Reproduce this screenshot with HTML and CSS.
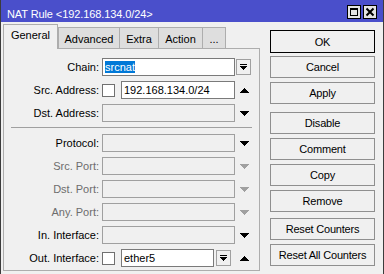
FILE: index.html
```
<!DOCTYPE html>
<html lang="en">
<head>
    <meta charset="UTF-8">
    <title>NAT Rule</title>
    <link rel="stylesheet" href="styles.css">
</head>
<body>
    <div class="window">
        <div class="titlebar">
            <span class="title">NAT Rule &lt;192.168.134.0/24&gt;</span>
            <div class="wbtns">
                <span class="wbtn">
                    <svg width="12" height="12" viewBox="0 0 12 12"><path d="M2 2h8v8H2z M3 4v5h6V4z" fill="#000" fill-rule="evenodd"/></svg>
                </span>
                <span class="wbtn">
                    <svg width="12" height="12" viewBox="0 0 12 12"><path d="M2.5 2.5l7 7M9.5 2.5l-7 7" stroke="#000" stroke-width="2"/></svg>
                </span>
            </div>
        </div>
        <div class="main">
            <div class="left">
                <div class="tabs">
                    <div class="tab active t-general">General</div>
                    <div class="tab t-adv">Advanced</div>
                    <div class="tab t-extra">Extra</div>
                    <div class="tab t-action">Action</div>
                    <div class="tab t-more">...</div>
                </div>
                <div class="panel">
                    <div class="row">
                        <span class="lbl">Chain:</span>
                        <span class="inp w-full"><span class="sel">srcnat</span></span>
                        <span class="dd dd-chain"><svg width="7" height="6" viewBox="0 0 7 6"><path d="M0 0h7v1H0z M0 2h7v1h-1v1h-1v1h-1v1h-1v-1h-1v-1h-1v-1H0z"/></svg></span>
                    </div>
                    <div class="row">
                        <span class="lbl">Src. Address:</span>
                        <span class="cb"></span>
                        <span class="inp w-cb">192.168.134.0/24</span>
                        <span class="arr"><svg width="9" height="5" viewBox="0 0 9 5"><path d="M4 0h1v1h1v1h1v1h1v1h1v1H0v-1h1v-1h1v-1h1v-1h1z"/></svg></span>
                    </div>
                    <div class="row">
                        <span class="lbl">Dst. Address:</span>
                        <span class="inp off w-full"></span>
                        <span class="arr"><svg width="9" height="5" viewBox="0 0 9 5"><path d="M0 0h9v1h-1v1h-1v1h-1v1h-1v1h-1v-1h-1v-1h-1v-1h-1v-1H0z"/></svg></span>
                    </div>
                    <div class="sep"></div>
                    <div class="row">
                        <span class="lbl">Protocol:</span>
                        <span class="inp off w-full"></span>
                        <span class="arr"><svg width="9" height="5" viewBox="0 0 9 5"><path d="M0 0h9v1h-1v1h-1v1h-1v1h-1v1h-1v-1h-1v-1h-1v-1h-1v-1H0z"/></svg></span>
                    </div>
                    <div class="row">
                        <span class="lbl dim">Src. Port:</span>
                        <span class="inp off w-full"></span>
                        <span class="arr dim"><svg width="9" height="5" viewBox="0 0 9 5"><path d="M0 0h9v1h-1v1h-1v1h-1v1h-1v1h-1v-1h-1v-1h-1v-1h-1v-1H0z"/></svg></span>
                    </div>
                    <div class="row">
                        <span class="lbl dim">Dst. Port:</span>
                        <span class="inp off w-full"></span>
                        <span class="arr dim"><svg width="9" height="5" viewBox="0 0 9 5"><path d="M0 0h9v1h-1v1h-1v1h-1v1h-1v1h-1v-1h-1v-1h-1v-1h-1v-1H0z"/></svg></span>
                    </div>
                    <div class="row">
                        <span class="lbl dim">Any. Port:</span>
                        <span class="inp off w-full"></span>
                        <span class="arr dim"><svg width="9" height="5" viewBox="0 0 9 5"><path d="M0 0h9v1h-1v1h-1v1h-1v1h-1v1h-1v-1h-1v-1h-1v-1h-1v-1H0z"/></svg></span>
                    </div>
                    <div class="row">
                        <span class="lbl">In. Interface:</span>
                        <span class="inp off w-full"></span>
                        <span class="arr"><svg width="9" height="5" viewBox="0 0 9 5"><path d="M0 0h9v1h-1v1h-1v1h-1v1h-1v1h-1v-1h-1v-1h-1v-1h-1v-1H0z"/></svg></span>
                    </div>
                    <div class="row">
                        <span class="lbl">Out. Interface:</span>
                        <span class="cb"></span>
                        <span class="inp w-out">ether5</span>
                        <span class="dd dd-out"><svg width="7" height="6" viewBox="0 0 7 6"><path d="M0 0h7v1H0z M0 2h7v1h-1v1h-1v1h-1v1h-1v-1h-1v-1h-1v-1H0z"/></svg></span>
                        <span class="arr arr-out"><svg width="9" height="5" viewBox="0 0 9 5"><path d="M4 0h1v1h1v1h1v1h1v1h1v1H0v-1h1v-1h1v-1h1v-1h1z"/></svg></span>
                    </div>
                </div>
            </div>
            <div class="side">
                <button class="btn def">OK</button>
                <button class="btn">Cancel</button>
                <button class="btn">Apply</button>
                <button class="btn gap">Disable</button>
                <button class="btn">Comment</button>
                <button class="btn">Copy</button>
                <button class="btn">Remove</button>
                <button class="btn gap2">Reset Counters</button>
                <button class="btn">Reset All Counters</button>
            </div>
        </div>
    </div>
</body>
</html>
```

FILE: styles.css
```
body {
    margin: 0;
    font-family: "Liberation Sans", Arial, sans-serif;
    font-size: 11px;
    color: #000;
    background: #f0f0f0;
}
.window {
    width: 384px;
    height: 274px;
    box-sizing: border-box;
    border-left: 1px solid #3c3c3c;
    border-right: 1px solid #3c3c3c;
    background: #f0f0f0;
    overflow: hidden;
}
.titlebar {
    height: 22px;
    background: #4a4fcb;
    display: flex;
    justify-content: space-between;
    padding: 0 6px;
}
.title {
    color: #fff;
    line-height: 16px;
    margin-top: 6px;
    letter-spacing: -0.1px;
}
.wbtns {
    display: flex;
    gap: 2px;
    margin-top: 5px;
}
.wbtn {
    width: 14px;
    height: 14px;
    box-sizing: border-box;
    border: 1px solid #000;
    background: #e4e4e4;
    display: flex;
}

.main {
    display: flex;
    padding-left: 2px;
}
.left {
    width: 257px;
}
.tabs {
    display: flex;
    align-items: flex-end;
    height: 26px;
}
.tab {
    height: 21px;
    box-sizing: border-box;
    border: 1px solid #adadad;
    border-bottom: none;
    background: #dedede;
    text-align: center;
    line-height: 20px;
    padding-top: 1px;
    margin-left: -1px;
}
.tab.active {
    height: 25px;
    margin-bottom: -1px;
    margin-left: 0;
    background: #f0f0f0;
    padding-top: 0;
    position: relative;
}
.t-general { width: 55px; }
.t-adv { width: 62px; margin-left: 0; }
.t-extra { width: 40px; }
.t-action { width: 45px; }
.t-more { width: 24px; }

.panel {
    height: 223px;
    box-sizing: border-box;
    border: 1px solid #adadad;
    padding-top: 9px;
}
.row {
    display: flex;
    align-items: center;
    height: 18px;
    margin-bottom: 5px;
}
.lbl {
    width: 95px;
    margin-right: 3px;
    text-align: right;
    white-space: nowrap;
}
.dim {
    color: #6d6d6d;
    fill: #a0a0a0;
}
.inp {
    height: 18px;
    box-sizing: border-box;
    border: 1px solid #7a7a7a;
    background: #fff;
    padding-left: 2px;
    line-height: 16px;
    white-space: nowrap;
}
.inp.off {
    background: #f0f0f0;
    border-color: #a0a0a0;
}
.w-full { width: 133px; }
.w-cb { width: 114px; }
.w-out { width: 93px; }
.sel {
    background: #0078d7;
    color: #fff;
}
.cb {
    width: 13px;
    height: 13px;
    box-sizing: border-box;
    border: 1px solid #707070;
    background: #fff;
    margin-right: 6px;
}
.dd {
    width: 15px;
    height: 16px;
    box-sizing: border-box;
    border: 1px solid #a0a0a0;
    background: #f0f0f0;
    display: flex;
    align-items: center;
    justify-content: center;
}
.dd-chain { margin-left: 1px; }
.dd-out { margin-left: 2px; }
.arr {
    margin-left: 5px;
    width: 9px;
    height: 5px;
    display: flex;
}
.arr-out { margin-left: 9px; }
.sep {
    height: 1px;
    background: #a0a0a0;
    margin: 1px 7px 6px 7px;
}

.side {
    margin-left: 10px;
    padding-top: 8px;
    width: 105px;
    display: flex;
    flex-direction: column;
}
.btn {
    height: 22px;
    box-sizing: border-box;
    border: 1px solid #8f8f8f;
    background: #f0f0f0;
    margin: 0 0 4px 0;
    padding: 0;
    font-family: inherit;
    font-size: 11px;
    letter-spacing: -0.2px;
    color: #000;
}
.btn.def {
    height: 23px;
    margin-bottom: 3px;
    border-color: #000;
}
.btn.gap { margin-top: 4px; }
.btn.gap2 { margin-top: 2px; }
```
